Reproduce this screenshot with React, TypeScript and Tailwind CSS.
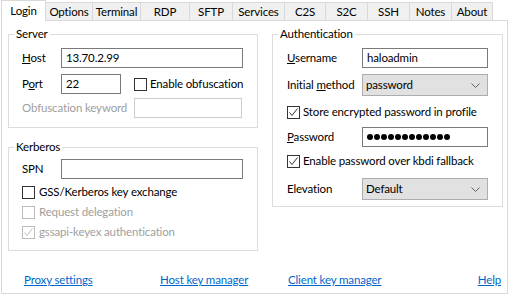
import React from "react";

type Tab = { label: string; w: string; active?: boolean };

const tabs: Tab[] = [
  { label: "Login", w: "w-[45px]", active: true },
  { label: "Options", w: "w-[47px]" },
  { label: "Terminal", w: "w-[48px]" },
  { label: "RDP", w: "w-[49px]" },
  { label: "SFTP", w: "w-[43px]" },
  { label: "Services", w: "w-[52px]" },
  { label: "C2S", w: "w-[41px]" },
  { label: "S2C", w: "w-[42px]" },
  { label: "SSH", w: "w-[42px]" },
  { label: "Notes", w: "w-[42px]" },
  { label: "About", w: "w-[41px]" },
];

const Check: React.FC<{ checked?: boolean; disabled?: boolean }> = ({ checked, disabled }) => (
  <span
    className={
      "w-[13px] h-[13px] shrink-0 border bg-white flex items-center justify-center " +
      (disabled ? "border-[#bcbcbc]" : "border-[#333333]")
    }
  >
    {checked && (
      <svg width="11" height="11" viewBox="0 0 11 11">
        <polyline
          points="1.5,5.5 4,8.5 9.5,1.5"
          fill="none"
          stroke={disabled ? "#bcbcbc" : "#333333"}
          strokeWidth="1"
        />
      </svg>
    )}
  </span>
);

const Select: React.FC<{ value: string }> = ({ value }) => (
  <div className="w-[126px] h-[22px] border border-[#adadad] bg-[#e1e1e1] flex items-center pl-[3px] pr-[7px]">
    <span className="flex-1">{value}</span>
    <svg width="9" height="5" viewBox="0 0 9 5">
      <polyline points="0.5,0.5 4.5,4.5 8.5,0.5" fill="none" stroke="#606060" strokeWidth="1" />
    </svg>
  </div>
);

const Legend: React.FC<{ children: React.ReactNode }> = ({ children }) => (
  <legend className="ml-[5px] px-[2px] leading-[16px]">{children}</legend>
);

export default function App() {
  return (
    <div className="w-[512px] h-[296px] bg-white text-black text-[11.5px] tracking-[-0.15px] leading-[16px] whitespace-nowrap font-['Lato',sans-serif]">
      {/* tab strip */}
      <div className="flex items-end h-[20px] pl-[1px]">
        {tabs.map((t) =>
          t.active ? (
            <div
              key={t.label}
              className={t.w + " h-[21px] -mb-px relative z-10 bg-white border-l border-r border-t border-[#d9d9d9] flex items-center justify-center"}
            >
              {t.label}
            </div>
          ) : (
            <div
              key={t.label}
              className={t.w + " h-[18px] bg-[#f0f0f0] border-r border-t border-[#d9d9d9] flex items-center justify-center pt-[1px]"}
            >
              {t.label}
            </div>
          )
        )}
      </div>

      {/* page */}
      <div className="ml-[1px] w-[507px] h-[274px] border border-[#d9d9d9] flex flex-col">
        <div className="flex pt-[5px] pl-[6px] gap-[14px]">
          <div className="w-[250px] flex flex-col">
            <fieldset className="border border-[#dcdcdc]">
              <Legend>Server</Legend>
              <div className="pl-[13px] pt-[6px] pb-[9px] flex flex-col">
                <div className="flex items-center h-[20px]">
                  <span className="w-[39px]">
                    <u>H</u>ost
                  </span>
                  <div className="w-[182px] h-[20px] border border-[#7a7a7a] px-[4px] flex items-center">13.70.2.99</div>
                </div>
                <div className="flex items-center h-[20px] mt-[6px]">
                  <span className="w-[39px]">
                    P<u>o</u>rt
                  </span>
                  <div className="w-[60px] h-[20px] border border-[#7a7a7a] px-[4px] flex items-center">22</div>
                  <span className="ml-[13px]">
                    <Check />
                  </span>
                  <span className="ml-[3px]">Enable obfuscation</span>
                </div>
                <div className="flex items-center h-[20px] mt-[4px]">
                  <span className="w-[112px] text-[#a0a0a0]">Obfuscation keyword</span>
                  <div className="w-[108px] h-[20px] border border-[#cccccc]" />
                </div>
              </div>
            </fieldset>

            <fieldset className="border border-[#dcdcdc] mt-[11px]">
              <Legend>Kerberos</Legend>
              <div className="pl-[13px] pt-[4px] pb-[8px] flex flex-col">
                <div className="flex items-center h-[20px]">
                  <span className="w-[39px]">SPN</span>
                  <div className="w-[182px] h-[20px] border border-[#7a7a7a]" />
                </div>
                <div className="flex items-center h-[20px] mt-[3px] gap-[4px]">
                  <Check />
                  <span>GSS/Kerberos key exchange</span>
                </div>
                <div className="flex items-center h-[20px] gap-[4px] text-[#a0a0a0]">
                  <Check disabled />
                  <span>Request delegation</span>
                </div>
                <div className="flex items-center h-[20px] gap-[4px] text-[#a0a0a0]">
                  <Check checked disabled />
                  <span>gssapi-keyex authentication</span>
                </div>
              </div>
            </fieldset>
          </div>

          <div className="w-[231px]">
            <fieldset className="border border-[#dcdcdc]">
              <Legend>Authentication</Legend>
              <div className="pl-[14px] pt-[6px] pb-[6px] flex flex-col">
                <div className="flex items-center h-[20px]">
                  <span className="w-[75px]">
                    <u>U</u>sername
                  </span>
                  <div className="w-[126px] h-[20px] border border-[#7a7a7a] px-[4px] flex items-center">haloadmin</div>
                </div>
                <div className="flex items-center h-[22px] mt-[6px]">
                  <span className="w-[75px]">
                    Initial <u>m</u>ethod
                  </span>
                  <Select value="password" />
                </div>
                <div className="flex items-center h-[20px] mt-[6px] gap-[3px]">
                  <Check checked />
                  <span>Store encrypted password in profile</span>
                </div>
                <div className="flex items-center h-[20px] mt-[5px]">
                  <span className="w-[75px]">
                    <u>P</u>assword
                  </span>
                  <div className="w-[126px] h-[20px] border border-[#7a7a7a] pl-[4px] flex items-center gap-[1px]">
                    {Array.from({ length: 12 }).map((_, i) => (
                      <span key={i} className="w-[6px] h-[6px] rounded-full bg-black" />
                    ))}
                  </div>
                </div>
                <div className="flex items-center h-[20px] mt-[4px] gap-[3px]">
                  <Check checked />
                  <span>Enable password over kbdi fallback</span>
                </div>
                <div className="flex items-center h-[22px] mt-[7px]">
                  <span className="w-[75px]">Elevation</span>
                  <Select value="Default" />
                </div>
              </div>
            </fieldset>
          </div>
        </div>

        {/* links */}
        <div className="mt-auto pb-[5px] pl-[22px] pr-[6px] flex text-[#0066cc]">
          <a className="w-[136px] underline">Proxy settings</a>
          <a className="w-[128px] underline">Host key manager</a>
          <a className="flex-1 underline">Client key manager</a>
          <a className="underline">Help</a>
        </div>
      </div>
    </div>
  );
}
